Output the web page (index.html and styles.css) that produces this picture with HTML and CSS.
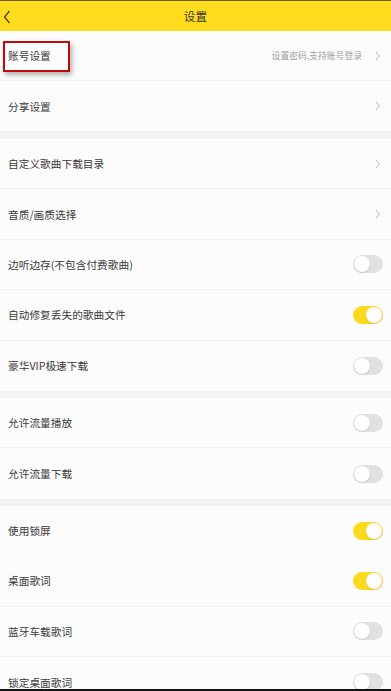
FILE: index.html
```html
<!DOCTYPE html>
<html lang="zh-CN">
<head>
<meta charset="utf-8">
<title>设置</title>
<link rel="stylesheet" href="styles.css">
</head>
<body>
<div class="page">
  <header class="topbar">
    <svg class="back" width="12" height="16" viewBox="0 0 12 16"><polyline points="7.5,2 2.5,8 7.5,14" fill="none" stroke="#3a3a2a" stroke-width="1.2"/></svg>
    <div class="title">设置</div>
  </header>

  <section class="group">
    <div class="row"><span class="label">账号设置</span><span class="hint">设置密码,支持账号登录</span><svg class="chev" width="6" height="10" viewBox="0 0 6 10"><polyline points="1,1 4.5,5 1,9" fill="none" stroke="#b8b8b8" stroke-width="1"/></svg></div>
    <div class="row"><span class="label">分享设置</span><svg class="chev" width="6" height="10" viewBox="0 0 6 10"><polyline points="1,1 4.5,5 1,9" fill="none" stroke="#b8b8b8" stroke-width="1"/></svg></div>
  </section>

  <section class="group gap8">
    <div class="row"><span class="label">自定义歌曲下载目录</span><svg class="chev" width="6" height="10" viewBox="0 0 6 10"><polyline points="1,1 4.5,5 1,9" fill="none" stroke="#b8b8b8" stroke-width="1"/></svg></div>
    <div class="row"><span class="label">音质/画质选择</span><svg class="chev" width="6" height="10" viewBox="0 0 6 10"><polyline points="1,1 4.5,5 1,9" fill="none" stroke="#b8b8b8" stroke-width="1"/></svg></div>
    <div class="row"><span class="label">边听边存(不包含付费歌曲)</span><span class="toggle"></span></div>
    <div class="row"><span class="label">自动修复丢失的歌曲文件</span><span class="toggle on"></span></div>
    <div class="row"><span class="label">豪华VIP极速下载</span><span class="toggle"></span></div>
  </section>

  <section class="group gap7">
    <div class="row"><span class="label">允许流量播放</span><span class="toggle"></span></div>
    <div class="row"><span class="label">允许流量下载</span><span class="toggle"></span></div>
  </section>

  <section class="group gap7">
    <div class="row noline"><span class="label">使用锁屏</span><span class="toggle on"></span></div>
    <div class="row"><span class="label">桌面歌词</span><span class="toggle on"></span></div>
    <div class="row"><span class="label">蓝牙车载歌词</span><span class="toggle"></span></div>
    <div class="row"><span class="label">锁定桌面歌词</span><span class="toggle"></span></div>
  </section>

  <div class="highlight"></div>
</div>
<div class="bottom-edge"></div>
</body>
</html>
```
FILE: styles.css
```css
html, body {
  margin: 0;
  padding: 0;
  background: #f3f3f3;
  font-family: "Noto Sans CJK SC", "Noto Sans", sans-serif;
  color: #333;
  overflow: hidden;
}
.page {
  position: relative;
  width: 391px;
}
.topbar {
  height: 30px;
  border-top: 1px solid #6a5f1c;
  background: #ffdd1e;
  display: flex;
  align-items: center;
  justify-content: center;
  position: relative;
}
.back {
  position: absolute;
  left: 2px;
  top: 8px;
}
.title {
  font-size: 11.5px;
  color: #333;
  letter-spacing: 0.3px;
}
.group {
  background: #fcfcfc;
}
.gap8 { margin-top: 8px; }
.gap7 { margin-top: 7px; }
.row {
  box-sizing: border-box;
  height: 50.4px;
  display: flex;
  align-items: center;
  padding: 0 8px 0 8px;
  border-bottom: 1px solid #efefef;
}
.group:first-of-type .row { height: 50px; }
.row:last-child, .row.noline { border-bottom: none; }
.label {
  flex: 1;
  font-size: 10.7px;
  color: #3a3a3a;
  white-space: nowrap;
}
.hint {
  font-size: 8.8px;
  color: #a0a0a0;
  margin-right: 13px;
}
.chev {
  display: block;
  margin-right: 2px;
}
.toggle {
  width: 30px;
  height: 18px;
  border-radius: 9px;
  background: #e1e1e1;
  position: relative;
  box-sizing: border-box;
}
.toggle::after {
  content: "";
  position: absolute;
  top: 1px;
  left: 1px;
  width: 16px;
  height: 16px;
  border-radius: 50%;
  background: #fff;
  box-shadow: 0 0.5px 1.5px rgba(0,0,0,0.2);
}
.toggle.on {
  background: #ffd91c;
}
.toggle.on::after {
  left: 13px;
}
.highlight {
  position: absolute;
  left: 3px;
  top: 41px;
  width: 67px;
  height: 31px;
  box-sizing: border-box;
  border: 2px solid #bd0b0b;
  box-shadow: 2px 3px 5px rgba(0,0,0,0.3);
}
.bottom-edge {
  position: fixed;
  left: 0;
  right: 0;
  bottom: 0;
  height: 2px;
  background: #111;
}
```
